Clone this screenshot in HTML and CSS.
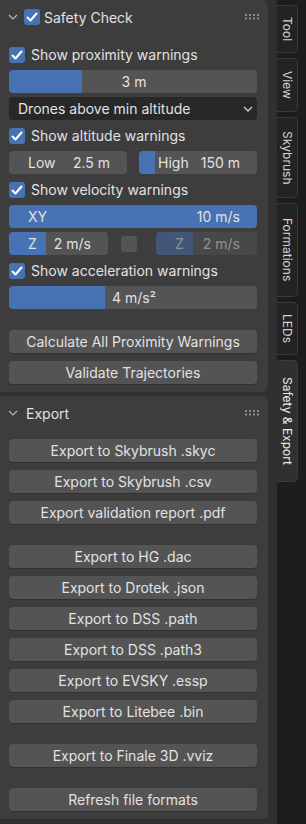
FILE: index.html
```html
<!DOCTYPE html>
<html>
  <head>
    <meta charset="utf-8" />
    <title>Safety &amp; Export</title>
    <link rel="stylesheet" href="styles.css">
  </head>
  <body>
    <div class="screen">
      <div class="region">
        <section class="panel">
          <div class="panel-head">
            <svg class="chev" viewBox="0 0 10 6"><polyline points="1,1 5,5 9,1" /></svg>
            <span class="check on"><svg viewBox="0 0 16 16"><polyline points="3.5,8.5 6.5,11.5 12.5,4.5" /></svg></span>
            <span class="panel-title">Safety Check</span>
            <svg class="grip" viewBox="0 0 14 6">
              <rect x="0" y="0" width="2" height="2" /><rect x="4" y="0" width="2" height="2" />
              <rect x="8" y="0" width="2" height="2" /><rect x="12" y="0" width="2" height="2" />
              <rect x="0" y="3.5" width="2" height="2" /><rect x="4" y="3.5" width="2" height="2" />
              <rect x="8" y="3.5" width="2" height="2" /><rect x="12" y="3.5" width="2" height="2" />
            </svg>
          </div>
          <div class="panel-body">
            <div class="check-row">
              <span class="check on"><svg viewBox="0 0 16 16"><polyline points="3.5,8.5 6.5,11.5 12.5,4.5" /></svg></span>
              Show proximity warnings
            </div>
            <div class="field center" style="--fill: 73px"><span>3 m</span></div>
            <div class="dropdown">
              <span>Drones above min altitude</span>
              <svg class="drop-chev" viewBox="0 0 10 6"><polyline points="1,1 5,5 9,1" /></svg>
            </div>

            <div class="check-row">
              <span class="check on"><svg viewBox="0 0 16 16"><polyline points="3.5,8.5 6.5,11.5 12.5,4.5" /></svg></span>
              Show altitude warnings
            </div>
            <div class="pair">
              <div class="field"><span>Low</span><span>2.5 m</span></div>
              <div class="field" style="--fill: 16px"><span>High</span><span>150 m</span></div>
            </div>

            <div class="check-row">
              <span class="check on"><svg viewBox="0 0 16 16"><polyline points="3.5,8.5 6.5,11.5 12.5,4.5" /></svg></span>
              Show velocity warnings
            </div>
            <div class="field" style="--fill: 100%"><span>XY</span><span>10 m/s</span></div>
            <div class="z-row">
              <div class="field z" style="--fill: 37px"><span>Z</span><span>2 m/s</span></div>
              <span class="check z-check"></span>
              <div class="field off" style="--fill: 37px"><span>Z</span><span>2 m/s</span></div>
            </div>

            <div class="check-row">
              <span class="check on"><svg viewBox="0 0 16 16"><polyline points="3.5,8.5 6.5,11.5 12.5,4.5" /></svg></span>
              Show acceleration warnings
            </div>
            <div class="field center" style="--fill: 96px"><span>4 m/s²</span></div>

            <div class="btn-group spaced">
              <div class="btn">Calculate All Proximity Warnings</div>
              <div class="btn">Validate Trajectories</div>
            </div>
          </div>
        </section>

        <section class="panel export">
          <div class="panel-head">
            <svg class="chev" viewBox="0 0 10 6"><polyline points="1,1 5,5 9,1" /></svg>
            <span class="panel-title">Export</span>
            <svg class="grip" viewBox="0 0 14 6">
              <rect x="0" y="0" width="2" height="2" /><rect x="4" y="0" width="2" height="2" />
              <rect x="8" y="0" width="2" height="2" /><rect x="12" y="0" width="2" height="2" />
              <rect x="0" y="3.5" width="2" height="2" /><rect x="4" y="3.5" width="2" height="2" />
              <rect x="8" y="3.5" width="2" height="2" /><rect x="12" y="3.5" width="2" height="2" />
            </svg>
          </div>
          <div class="panel-body groups">
            <div class="btn-group">
              <div class="btn">Export to Skybrush .skyc</div>
              <div class="btn">Export to Skybrush .csv</div>
              <div class="btn">Export validation report .pdf</div>
            </div>
            <div class="btn-group">
              <div class="btn">Export to HG .dac</div>
              <div class="btn">Export to Drotek .json</div>
              <div class="btn">Export to DSS .path</div>
              <div class="btn">Export to DSS .path3</div>
              <div class="btn">Export to EVSKY .essp</div>
              <div class="btn">Export to Litebee .bin</div>
            </div>
            <div class="btn-group">
              <div class="btn">Export to Finale 3D .vviz</div>
            </div>
            <div class="btn-group">
              <div class="btn">Refresh file formats</div>
            </div>
          </div>
        </section>
      </div>

      <nav class="tabs">
        <div class="tab tab-tool">Tool</div>
        <div class="tab tab-view">View</div>
        <div class="tab tab-skybrush">Skybrush</div>
        <div class="tab tab-formations">Formations</div>
        <div class="tab tab-leds">LEDs</div>
        <div class="tab tab-safety active">Safety &amp; Export</div>
      </nav>
    </div>
  </body>
</html>
```

FILE: styles.css
```css
* {
  box-sizing: border-box;
}

body {
  margin: 0;
  width: 306px;
  height: 824px;
  overflow: hidden;
  background: #1d1d1d;
  font-family: Inter, "DejaVu Sans", sans-serif;
  font-size: 14px;
  color: #e2e2e2;
}

.screen {
  display: flex;
  height: 824px;
}

.region {
  width: 277px;
  padding-right: 9px;
  background: #303030;
  display: flex;
  flex-direction: column;
  gap: 4px;
}

.panel {
  background: #3d3d3d;
  border-radius: 0 5px 5px 0;
}

.panel-head {
  height: 34px;
  display: flex;
  align-items: center;
  padding: 0 9px 0 8px;
}

.chev {
  width: 10px;
  height: 6px;
  margin-right: 6px;
  fill: none;
  stroke: #b8b8b8;
  stroke-width: 1.2;
}

.export .chev {
  margin-right: 8px;
}

.panel-title {
  flex: 1;
  margin-left: 4px;
}

.export .panel-title {
  margin-left: 0;
}

.grip {
  width: 14px;
  height: 6px;
  fill: #8c8c8c;
}

.panel-body {
  padding: 9px 11px 8px 9px;
  display: flex;
  flex-direction: column;
  gap: 4px;
}

.panel-body.groups {
  gap: 21px;
}

.check-row {
  height: 23px;
  display: flex;
  align-items: center;
  gap: 6px;
}

.check {
  flex: none;
  width: 16px;
  height: 16px;
  border-radius: 3px;
  background: #545454;
  display: flex;
  align-items: center;
  justify-content: center;
}

.check.on {
  background: #4772b3;
}

.check svg {
  width: 16px;
  height: 16px;
  fill: none;
  stroke: white;
  stroke-width: 2;
  stroke-linecap: round;
  stroke-linejoin: round;
}

.field {
  --fill: 0px;
  height: 23px;
  border-radius: 4px;
  background: linear-gradient(to right, #4772b3 var(--fill), #545454 var(--fill));
  display: flex;
  align-items: center;
  justify-content: space-between;
  padding: 0 17px 0 19px;
}

.field.center {
  justify-content: center;
}

.dropdown {
  height: 23px;
  border-radius: 4px;
  background: #282828;
  display: flex;
  align-items: center;
  justify-content: space-between;
  padding: 0 4px 0 9px;
}

.drop-chev {
  width: 10px;
  height: 6px;
  fill: none;
  stroke: #d0d0d0;
  stroke-width: 1.3;
}

.pair {
  display: flex;
  gap: 12px;
}

.pair .field {
  flex: 1;
}

.z-row {
  display: flex;
  align-items: center;
}

.field.z {
  width: 99px;
}

.z-check {
  margin-left: 13px;
}

.field.off {
  flex: 1;
  margin-left: 19px;
  opacity: 0.5;
}

.btn-group {
  display: flex;
  flex-direction: column;
  gap: 8px;
}

.btn-group.spaced {
  margin-top: 17px;
}

.btn {
  height: 23px;
  border-radius: 4px;
  background: #545454;
  box-shadow: 0 1px 0 rgba(0, 0, 0, 0.18);
  display: flex;
  align-items: center;
  justify-content: center;
}

.tabs {
  flex: 1;
  padding-top: 5px;
  display: flex;
  flex-direction: column;
  gap: 5px;
  background: #1d1d1d;
}

.tab {
  flex: none;
  width: 21px;
  writing-mode: vertical-rl;
  display: flex;
  justify-content: center;
  align-items: center;
  background: #232323;
  border: 1px solid #3b3b3b;
  border-left: none;
  border-radius: 0 5px 5px 0;
  font-size: 12px;
  color: #d2d2d2;
  white-space: nowrap;
}

.tab-tool { height: 48px; }
.tab-view { height: 54px; }
.tab-skybrush { height: 81px; }
.tab-formations { height: 94px; }
.tab-leds { height: 53px; }
.tab-safety { height: 122px; }

.tab.active {
  background: #303030;
  color: #ececec;
}
```
